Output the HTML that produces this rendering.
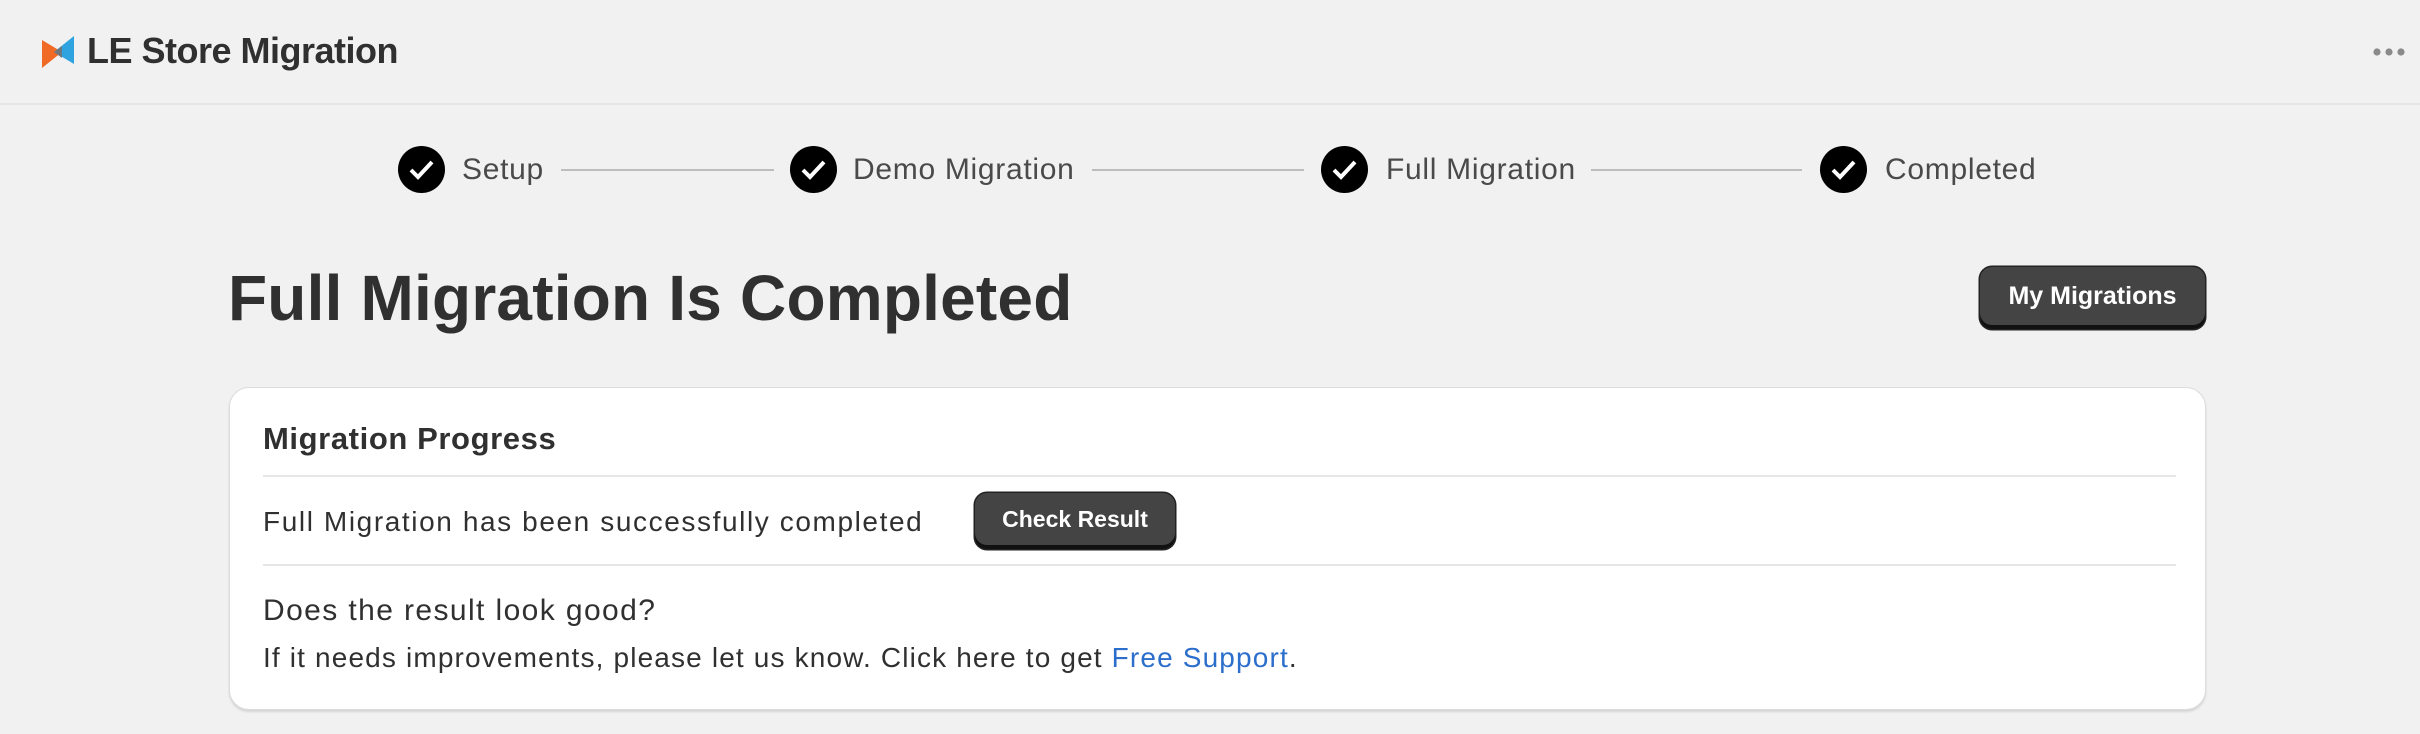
<!DOCTYPE html>
<html><head><meta charset="utf-8"><style>
*{margin:0;padding:0;box-sizing:border-box}
body{width:2420px;height:734px;background:#f1f1f1;font-family:"Liberation Sans",Arial,sans-serif;color:#303030;position:relative;overflow:hidden}
.abs{position:absolute;white-space:nowrap}
.hdr{position:absolute;left:0;top:0;width:2420px;height:105px;border-bottom:2px solid #e6e6e6}
.circ{position:absolute;width:47px;height:47px;border-radius:50%;background:#000;top:146px}
.circ svg{position:absolute;left:10px;top:11px}
.line{position:absolute;top:169px;height:2px;background:#bdbdbd}
.st{position:absolute;top:152px;font-size:30px;color:#4a4a4a;line-height:36px;letter-spacing:0.7px}
.btn{position:absolute;background:#444;border-radius:12px;color:#fff;font-weight:bold;text-align:center;box-shadow:inset 0 -4px 0 #111,0 0 0 1.5px #222}
.card{position:absolute;left:229px;top:387px;width:1977px;height:323px;background:#fff;border-radius:20px;border:1px solid #dcdcdc;box-shadow:0 2px 2px rgba(0,0,0,.12)}
.div{position:absolute;left:33px;width:1913px;height:2px;background:#e6e6e6}
</style></head><body>
<div class="hdr"></div>
<svg class="abs" style="left:42px;top:36px" width="32" height="32" viewBox="0 0 32 32">
<polygon points="0,4 20,16 0,32" fill="#f06a25"/>
<polygon points="32,0 32,28 12,16" fill="#2fa3e0"/>
<polygon points="12,16 20,10 20,22" fill="#6d7780"/>
</svg>
<div class="abs" style="left:87px;top:30px;font-size:36px;font-weight:bold;color:#303030;letter-spacing:-0.5px">LE Store Migration</div>
<svg class="abs" style="left:2372px;top:46px" width="34" height="12"><circle cx="5" cy="6" r="3.6" fill="#8a8a8a"/><circle cx="17" cy="6" r="3.6" fill="#8a8a8a"/><circle cx="29" cy="6" r="3.6" fill="#8a8a8a"/></svg>

<div class="circ" style="left:398px"><svg width="27" height="25" viewBox="0 0 27 25"><path d="M3 13 L10 20 L24 5" stroke="#fff" stroke-width="4" fill="none"/></svg></div>
<div class="st" style="left:462px">Setup</div>
<div class="line" style="left:561px;width:213px"></div>
<div class="circ" style="left:790px"><svg width="27" height="25" viewBox="0 0 27 25"><path d="M3 13 L10 20 L24 5" stroke="#fff" stroke-width="4" fill="none"/></svg></div>
<div class="st" style="left:853px">Demo Migration</div>
<div class="line" style="left:1092px;width:212px"></div>
<div class="circ" style="left:1321px"><svg width="27" height="25" viewBox="0 0 27 25"><path d="M3 13 L10 20 L24 5" stroke="#fff" stroke-width="4" fill="none"/></svg></div>
<div class="st" style="left:1386px">Full Migration</div>
<div class="line" style="left:1591px;width:211px"></div>
<div class="circ" style="left:1820px"><svg width="27" height="25" viewBox="0 0 27 25"><path d="M3 13 L10 20 L24 5" stroke="#fff" stroke-width="4" fill="none"/></svg></div>
<div class="st" style="left:1885px">Completed</div>

<div class="abs" style="left:228px;top:260px;font-size:64px;font-weight:bold;letter-spacing:0.2px;line-height:76px">Full Migration Is Completed</div>
<div class="btn" style="left:1980px;top:267px;width:225px;height:62px;font-size:25px;line-height:58px">My Migrations</div>

<div class="card">
<div class="abs" style="left:33px;top:32px;font-size:31px;font-weight:bold;line-height:38px;letter-spacing:0.6px">Migration Progress</div>
<div class="div" style="top:87px"></div>
<div class="abs" style="left:33px;top:117px;font-size:28px;line-height:34px;letter-spacing:1.6px">Full Migration has been successfully completed</div>
<div class="btn" style="left:745px;top:105px;width:200px;height:56px;font-size:23px;line-height:52px">Check Result</div>
<div class="div" style="top:176px"></div>
<div class="abs" style="left:33px;top:205px;font-size:30px;line-height:36px;letter-spacing:1.4px">Does the result look good?</div>
<div class="abs" style="left:33px;top:253px;font-size:28px;line-height:34px;letter-spacing:1.15px">If it needs improvements, please let us know. Click here to get <span style="color:#2c6ecb">Free Support</span>.</div>
</div>
</body></html>
